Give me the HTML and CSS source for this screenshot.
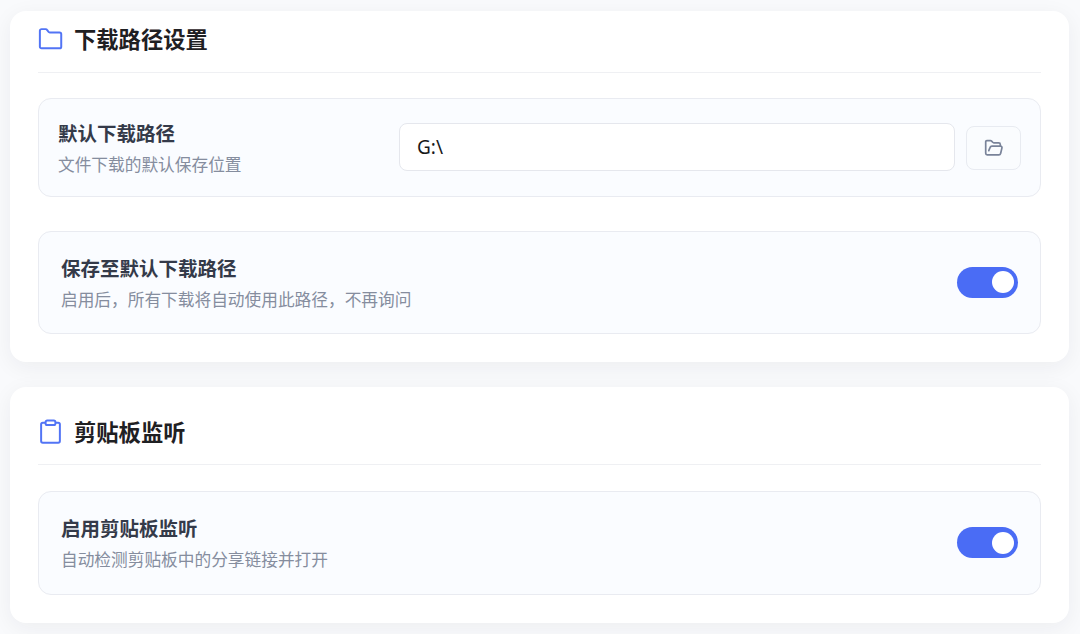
FILE: index.html
```
<!DOCTYPE html>
<html lang="zh-CN">
<head>
  <meta charset="UTF-8" />
  <title>下载设置</title>
  <link rel="stylesheet" href="styles.css">
</head>
<body>

  <section class="card">
    <h2 class="card-title">
      <svg class="title-icon" viewBox="0 0 24 24">
        <path d="M1.800 19.800V4.600a1.600 1.600 0 0 1 1.600-1.600h4a1.600 1.600 0 0 1 1.300.700l1.300 1.800a1.600 1.600 0 0 0 1.300.700h9.400a1.600 1.600 0 0 1 1.600 1.600v12a1.600 1.600 0 0 1-1.600 1.600H3.400a1.600 1.600 0 0 1-1.600-1.600z" />
      </svg>
      <span>下载路径设置</span>
    </h2>

    <div class="setting path-setting">
      <div class="info">
        <div class="label">默认下载路径</div>
        <div class="desc">文件下载的默认保存位置</div>
      </div>
      <input class="path-input" type="text" value="G:\">
      <button class="browse-btn" aria-label="浏览">
        <svg viewBox="0 0 20 20">
          <path d="M3.200 16.800a1.500 1.500 0 0 1-1.500-1.500V3.800a1.200 1.200 0 0 1 1.200-1.200h3.600a1.500 1.500 0 0 1 1.100.500l1.100 1.200a1.500 1.500 0 0 0 1.100.500h4.900a1.600 1.600 0 0 1 1.600 1.600v1.700M3.200 16.800h11.700a1.800 1.800 0 0 0 1.700-1.300l1.300-5.400a1.500 1.500 0 0 0-1.400-2H8a2 2 0 0 0-1.900 1.300L4.800 12.600" />
        </svg>
      </button>
    </div>

    <div class="setting save-setting">
      <div class="info">
        <div class="label">保存至默认下载路径</div>
        <div class="desc">启用后，所有下载将自动使用此路径，不再询问</div>
      </div>
      <label class="switch">
        <input type="checkbox" checked>
        <span class="slider"></span>
      </label>
    </div>
  </section>

  <section class="card clipboard-card">
    <h2 class="card-title">
      <svg class="title-icon" viewBox="0 0 24 24">
        <path d="M7 3.500H4.600A1.600 1.600 0 0 0 3 5.100v16a1.600 1.600 0 0 0 1.600 1.600h14.800a1.600 1.600 0 0 0 1.600-1.600v-16a1.600 1.600 0 0 0-1.600-1.600H17" />
        <rect x="7.300" y="1.400" width="9.400" height="4.400" rx="1.500" />
      </svg>
      <span>剪贴板监听</span>
    </h2>

    <div class="setting">
      <div class="info">
        <div class="label">启用剪贴板监听</div>
        <div class="desc">自动检测剪贴板中的分享链接并打开</div>
      </div>
      <label class="switch">
        <input type="checkbox" checked>
        <span class="slider"></span>
      </label>
    </div>
  </section>

</body>
</html>
```
FILE: styles.css
```
* {
  box-sizing: border-box;
}

body {
  margin: 0;
  padding: 11px 11px 0 10px;
  height: 634px;
  overflow: hidden;
  background-color: #f9fafc;
  font-family: "Noto Sans", "Noto Sans CJK SC", sans-serif;
}

.card {
  height: 351px;
  padding: 0 28px;
  background-color: #fff;
  border-radius: 16px;
  box-shadow: 0 5px 22px rgba(30, 40, 50, 0.06);
}

.clipboard-card {
  height: 236px;
  margin-top: 25px;
  padding-top: 17px;
}

.card-title {
  display: flex;
  align-items: center;
  gap: 11px;
  height: 62px;
  margin: 0 0 25px;
  padding-bottom: 7px;
  border-bottom: 1px solid #eff0f3;
  color: #1f2023;
  font-family: "Noto Sans CJK SC", sans-serif;
  font-size: 22.3px;
  font-weight: 700;
}

.clipboard-card .card-title {
  height: 61px;
  padding-bottom: 6px;
}

.title-icon {
  width: 25px;
  height: 25px;
  fill: none;
  stroke: #5274f5;
  stroke-width: 1.9;
}

.setting {
  display: flex;
  align-items: center;
  justify-content: space-between;
  height: 104px;
  padding: 0 22px;
  background-color: #fafcff;
  border: 1px solid #e9ebf1;
  border-radius: 13px;
}

.clipboard-card .card-title + .setting {
  margin-top: 26px;
}

.path-setting {
  height: 99px;
  margin-bottom: 34px;
  padding: 0 19px;
}

.save-setting {
  height: 103px;
}

.path-setting .info {
  width: 341px;
}

.label {
  color: #343a49;
  font-family: "Noto Sans CJK SC", sans-serif;
  font-size: 19.5px;
  font-weight: 700;
  line-height: 32px;
}

.desc {
  color: #858d9e;
  font-family: "Noto Sans CJK SC", sans-serif;
  font-size: 16.7px;
  line-height: 30px;
}

.path-input {
  flex: 1;
  height: 48px;
  margin: 0 11px 1px 0;
  padding: 0 17px;
  background-color: #fff;
  border: 1px solid #e5e7ed;
  border-radius: 8px;
  color: #17181a;
  font-family: "Noto Sans", sans-serif;
  font-size: 19px;
}

.browse-btn {
  display: flex;
  align-items: center;
  justify-content: center;
  width: 55px;
  height: 44px;
  padding: 0;
  background-color: #fafcfe;
  border: 1px solid #e8ebf1;
  border-radius: 8px;
}

.browse-btn svg {
  width: 20px;
  height: 20px;
  fill: none;
  stroke: #798399;
  stroke-width: 1.7;
  stroke-linecap: round;
  stroke-linejoin: round;
}

.switch {
  width: 61px;
  height: 31px;
  margin-bottom: 1px;
}

.switch input {
  display: none;
}

.slider {
  display: flex;
  align-items: center;
  justify-content: flex-end;
  height: 31px;
  padding-right: 4px;
  background-color: #4a6cf5;
  border-radius: 16px;
}

.slider::before {
  content: "";
  width: 22px;
  height: 22px;
  background-color: #fff;
  border-radius: 50%;
}
```
